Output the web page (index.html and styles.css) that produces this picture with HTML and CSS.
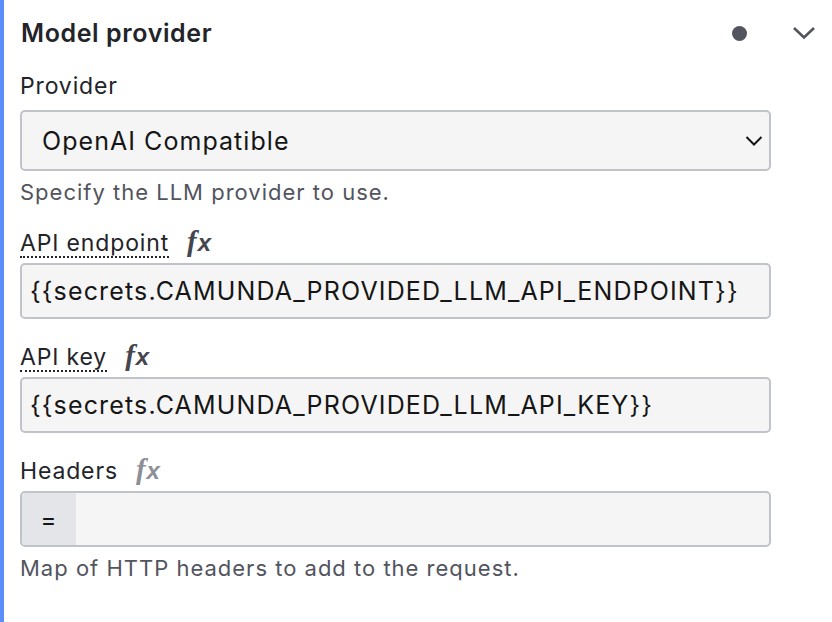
FILE: index.html
```html
<!DOCTYPE html>
<html>
<head>
<meta charset="utf-8">
<link rel="stylesheet" href="styles.css">
</head>
<body>
<div class="group">
  <div class="group-header">
    <div class="group-title">Model provider</div>
    <div class="group-actions">
      <span class="dot"></span>
      <svg class="toggle" width="24" height="16" viewBox="0 0 24 16"><path d="M2 3 L12 12.5 L22 3" fill="none" stroke="#52545e" stroke-width="2.6"/></svg>
    </div>
  </div>
  <div class="entries">
    <div class="entry">
      <div class="label-row"><span class="label">Provider</span></div>
      <div class="select">
        <span>OpenAI Compatible</span>
        <svg class="select-arrow" width="18" height="12" viewBox="0 0 18 12"><path d="M1.5 2 L9 9.5 L16.5 2" fill="none" stroke="#161616" stroke-width="2"/></svg>
      </div>
      <div class="desc">Specify the LLM provider to use.</div>
    </div>
    <div class="entry">
      <div class="label-row"><span class="label dotted">API endpoint</span><span class="fx"><span class="f">f</span><span class="x">x</span></span></div>
      <div class="input">{{secrets.CAMUNDA_PROVIDED_LLM_API_ENDPOINT}}</div>
    </div>
    <div class="entry">
      <div class="label-row"><span class="label dotted">API key</span><span class="fx"><span class="f">f</span><span class="x">x</span></span></div>
      <div class="input">{{secrets.CAMUNDA_PROVIDED_LLM_API_KEY}}</div>
    </div>
    <div class="entry">
      <div class="label-row"><span class="label">Headers</span><span class="fx light"><span class="f">f</span><span class="x">x</span></span></div>
      <div class="input feel"><span class="prefix">=</span><span class="feel-body"></span></div>
      <div class="desc">Map of HTTP headers to add to the request.</div>
    </div>
  </div>
</div>
</body>
</html>
```
FILE: styles.css
```css
html, body {
  margin: 0;
  padding: 0;
  background: #ffffff;
}
body {
  font-family: Inter, "Noto Sans", sans-serif;
  color: #22242a;
}
.group {
  border-left: 4px solid #5b8dfc;
  min-height: 622px;
  box-sizing: border-box;
}
.group-header {
  display: flex;
  align-items: center;
  justify-content: space-between;
  height: 66px;
  padding-left: 17px;
  padding-right: 16px;
}
.group-title {
  font-size: 25px;
  font-weight: 600;
  letter-spacing: 0.6px;
  color: #22242a;
}
.group-actions {
  display: flex;
  align-items: center;
  gap: 45px;
}
.dot {
  width: 15px;
  height: 15px;
  border-radius: 50%;
  background: #52545e;
}
.toggle {
  display: block;
}
.entries {
  padding: 6px 61px 0 16px;
}
.entry {
  display: flex;
  flex-direction: column;
  margin-bottom: 20px;
}
.label-row {
  display: flex;
  align-items: baseline;
  gap: 18px;
  height: 30px;
  margin-bottom: 8px;
}
.label {
  font-size: 23px;
  line-height: 28px;
  letter-spacing: 0.85px;
  color: #22242a;
}
.dotted {
  border-bottom: 2px dotted #22242a;
  line-height: 26px;
}
.fx {
  font-weight: bold;
  font-style: italic;
  color: #45464e;
  white-space: nowrap;
}
.fx .f {
  font-family: "Liberation Serif", serif;
  font-size: 29px;
}
.fx .x {
  font-family: "Liberation Sans", sans-serif;
  font-size: 24px;
  margin-left: 1px;
}
.fx.light {
  color: #8d8f97;
}
.select {
  height: 61px;
  box-sizing: border-box;
  border: 2px solid #c1c3ca;
  border-radius: 5px;
  background: #f5f5f5;
  display: flex;
  align-items: center;
  justify-content: space-between;
  padding: 0 6px 0 20px;
  font-size: 25px;
  letter-spacing: 1.05px;
  color: #161616;
}
.select-arrow {
  display: block;
}
.input {
  height: 56px;
  box-sizing: border-box;
  border: 2px solid #c1c3ca;
  border-radius: 5px;
  background: #f5f5f5;
  display: flex;
  align-items: center;
  padding: 0 8px;
  font-size: 25px;
  letter-spacing: 1.15px;
  color: #161616;
  white-space: nowrap;
  overflow: hidden;
}
.input.feel {
  padding: 0;
}
.prefix {
  width: 54px;
  align-self: stretch;
  display: flex;
  align-items: center;
  justify-content: center;
  background: #e4e5e9;
  color: #161616;
  font-size: 24px;
}
.desc {
  font-size: 22px;
  letter-spacing: 1px;
  color: #52545e;
  margin-top: 8px;
}
```
